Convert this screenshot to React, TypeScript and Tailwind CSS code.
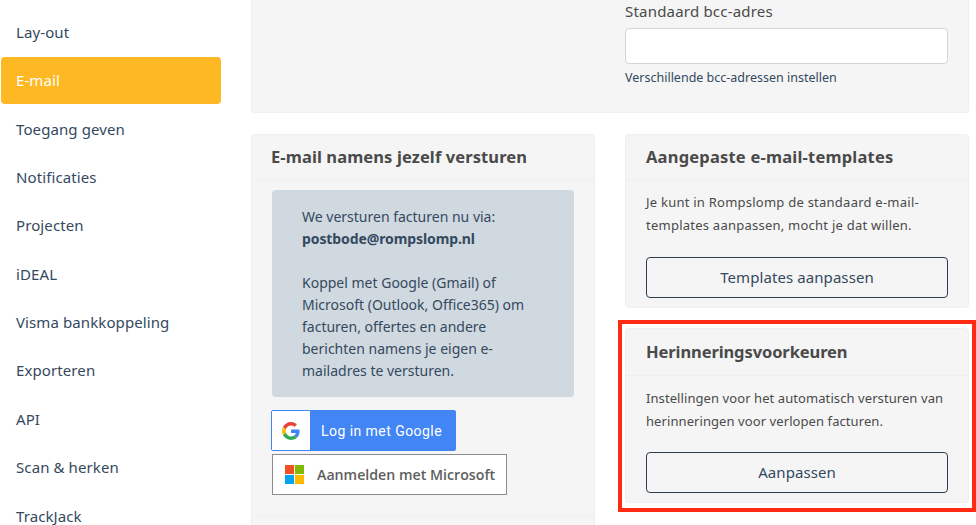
import React from "react";

const nav = ["Lay-out", "E-mail", "Toegang geven", "Notificaties", "Projecten", "iDEAL", "Visma bankkoppeling", "Exporteren", "API", "Scan & herken", "TrackJack"];
const font = { fontFamily: '"Noto Sans", sans-serif' };

function Card({ title, children, className = "", titleClass = "" }: { title: string; children: React.ReactNode; className?: string; titleClass?: string }) {
  return (
    <div className={`rounded-[4px] border border-[#efefef] bg-[#f5f5f5] ${className}`}>
      <div className={`flex items-center border-b border-[#efefef] px-5 text-[16.5px] font-bold text-[#4a4a4a] ${titleClass}`}>{title}</div>
      {children}
    </div>
  );
}

function OutlineButton({ label }: { label: string }) {
  return (
    <div className="flex h-[41px] items-center justify-center rounded-[4px] border border-[#2c3e50] text-[15px] tracking-[0.08px] text-[#34495e]">{label}</div>
  );
}

export default function App() {
  return (
    <div className="relative flex h-[525px] w-[976px] overflow-hidden bg-white" style={font}>
      <nav className="flex w-[251px] shrink-0 flex-col gap-[1.4px] pl-[1px] pt-[8.5px]">
        {nav.map((n) => (
          <div key={n} className={`flex h-[47px] w-[220px] shrink-0 items-center rounded-[4px] pl-[15px] text-[15px] tracking-[0.1px] ${n === "E-mail" ? "bg-[#fdb823] text-white" : "text-[#34495e]"}`}>
            {n}
          </div>
        ))}
      </nav>
      <main className="flex w-[718px] shrink-0 flex-col">
        <section className="h-[113px] shrink-0 rounded-b-[4px] border border-t-0 border-[#efefef] bg-[#f5f5f5] pl-[373px] pr-[20px]">
          <div className="h-[28px] pt-[1px] text-[15px] leading-[21px] tracking-[0.2px] text-[#4a4a4a]">Standaard bcc-adres</div>
          <div className="h-[36px] rounded-[4px] border border-[#d4d4d4] bg-white" />
          <div className="mt-[5px] text-[12.5px] leading-[18px] text-[#34495e]">Verschillende bcc-adressen instellen</div>
        </section>
        <div className="mt-[21px] flex justify-between">
          <Card title="E-mail namens jezelf versturen" titleClass="h-[46px] pl-[19px] tracking-[0.1px]" className="h-[420px] w-[344px] shrink-0">
            <div className="px-5 pt-[9px]">
              <div className="h-[207px] rounded-[4px] bg-[#d0d8e0] pl-[30px] pr-[46px] pt-[16px] text-[14px] leading-[22px] text-[#34495e]">
                <div>We versturen facturen nu via:</div>
                <div className="font-bold tracking-[-0.1px]">postbode@rompslomp.nl</div>
                <div className="h-[22px]" />
                <div>Koppel met Google (Gmail) of Microsoft (Outlook, Office365) om facturen, offertes en andere berichten namens je eigen e-mailadres te versturen.</div>
              </div>
              <div className="-ml-[1px] mt-[13px] flex h-[41px] w-[185px] items-center rounded-[2px] border border-[#4285f4] bg-[#4285f4]">
                <div className="flex h-full w-[38px] items-center justify-center bg-white">
                  <svg width="18" height="18" viewBox="0 0 48 48">
                    <path fill="#EA4335" d="M24 9.5c3.5 0 6.7 1.3 9.1 3.6l6.8-6.8C35.8 2.5 30.3 0 24 0 14.6 0 6.5 5.4 2.6 13.2l7.9 6.1C12.4 13.7 17.7 9.5 24 9.5z" />
                    <path fill="#4285F4" d="M46.9 24.5c0-1.6-.1-3.1-.4-4.5H24v9h12.9c-.6 3-2.2 5.5-4.8 7.2l7.7 6c4.5-4.2 7.1-10.3 7.1-17.7z" />
                    <path fill="#FBBC05" d="M10.5 28.7c-.5-1.4-.8-3-.8-4.7s.3-3.2.8-4.7l-7.9-6.1C.9 16.5 0 20.1 0 24s.9 7.5 2.6 10.8l7.9-6.1z" />
                    <path fill="#34A853" d="M24 48c6.5 0 11.9-2.1 15.9-5.8l-7.7-6c-2.1 1.4-4.9 2.3-8.2 2.3-6.3 0-11.6-4.2-13.5-9.8l-7.9 6.1C6.5 42.6 14.6 48 24 48z" />
                  </svg>
                </div>
                <span className="ml-[11px] pt-[2px] text-[14px] font-normal tracking-[0.45px] text-white" style={{ fontFamily: "Roboto, sans-serif" }}>Log in met Google</span>
              </div>
              <div className="mt-[3px] flex h-[41px] w-[235px] items-center border border-[#8c8c8c] bg-white pl-[12px]">
                <svg width="19" height="19" viewBox="0 0 21 21">
                  <rect x="0" y="0" width="10" height="10" fill="#f25022" />
                  <rect x="11" y="0" width="10" height="10" fill="#7fba00" />
                  <rect x="0" y="11" width="10" height="10" fill="#00a4ef" />
                  <rect x="11" y="11" width="10" height="10" fill="#ffb900" />
                </svg>
                <span className="ml-[13px] text-[14.2px] font-semibold text-[#5e5e5e]" style={{ fontFamily: '"Open Sans", sans-serif' }}>Aanmelden met Microsoft</span>
              </div>
            </div>
            <div className="mt-[20px] border-t border-[#efefef]" />
          </Card>
          <div className="flex w-[344px] shrink-0 flex-col gap-[20px]">
            <Card title="Aangepaste e-mail-templates" titleClass="h-[46px] tracking-[0.2px]" className="h-[174px]">
              <div className="px-5 pt-[10px]">
                <p className="text-[13px] leading-[23px] tracking-[0.24px] text-[#4a4a4a]">Je kunt in Rompslomp de standaard e-mail-templates aanpassen, mocht je dat willen.</p>
                <div className="mt-[20px]"><OutlineButton label="Templates aanpassen" /></div>
              </div>
            </Card>
            <Card title="Herinneringsvoorkeuren" titleClass="h-[47px] tracking-[-0.1px]" className="h-[175px]">
              <div className="px-5 pt-[11px]">
                <p className="text-[13px] leading-[23px] tracking-[0.08px] text-[#4a4a4a]">Instellingen voor het automatisch versturen van herinneringen voor verlopen facturen.</p>
                <div className="mt-[19px]"><OutlineButton label="Aanpassen" /></div>
              </div>
            </Card>
          </div>
        </div>
      </main>
      <div className="pointer-events-none absolute left-[618px] top-[320px] h-[192px] w-[358px] border-[4px] border-[#ff2a12]" />
    </div>
  );
}
